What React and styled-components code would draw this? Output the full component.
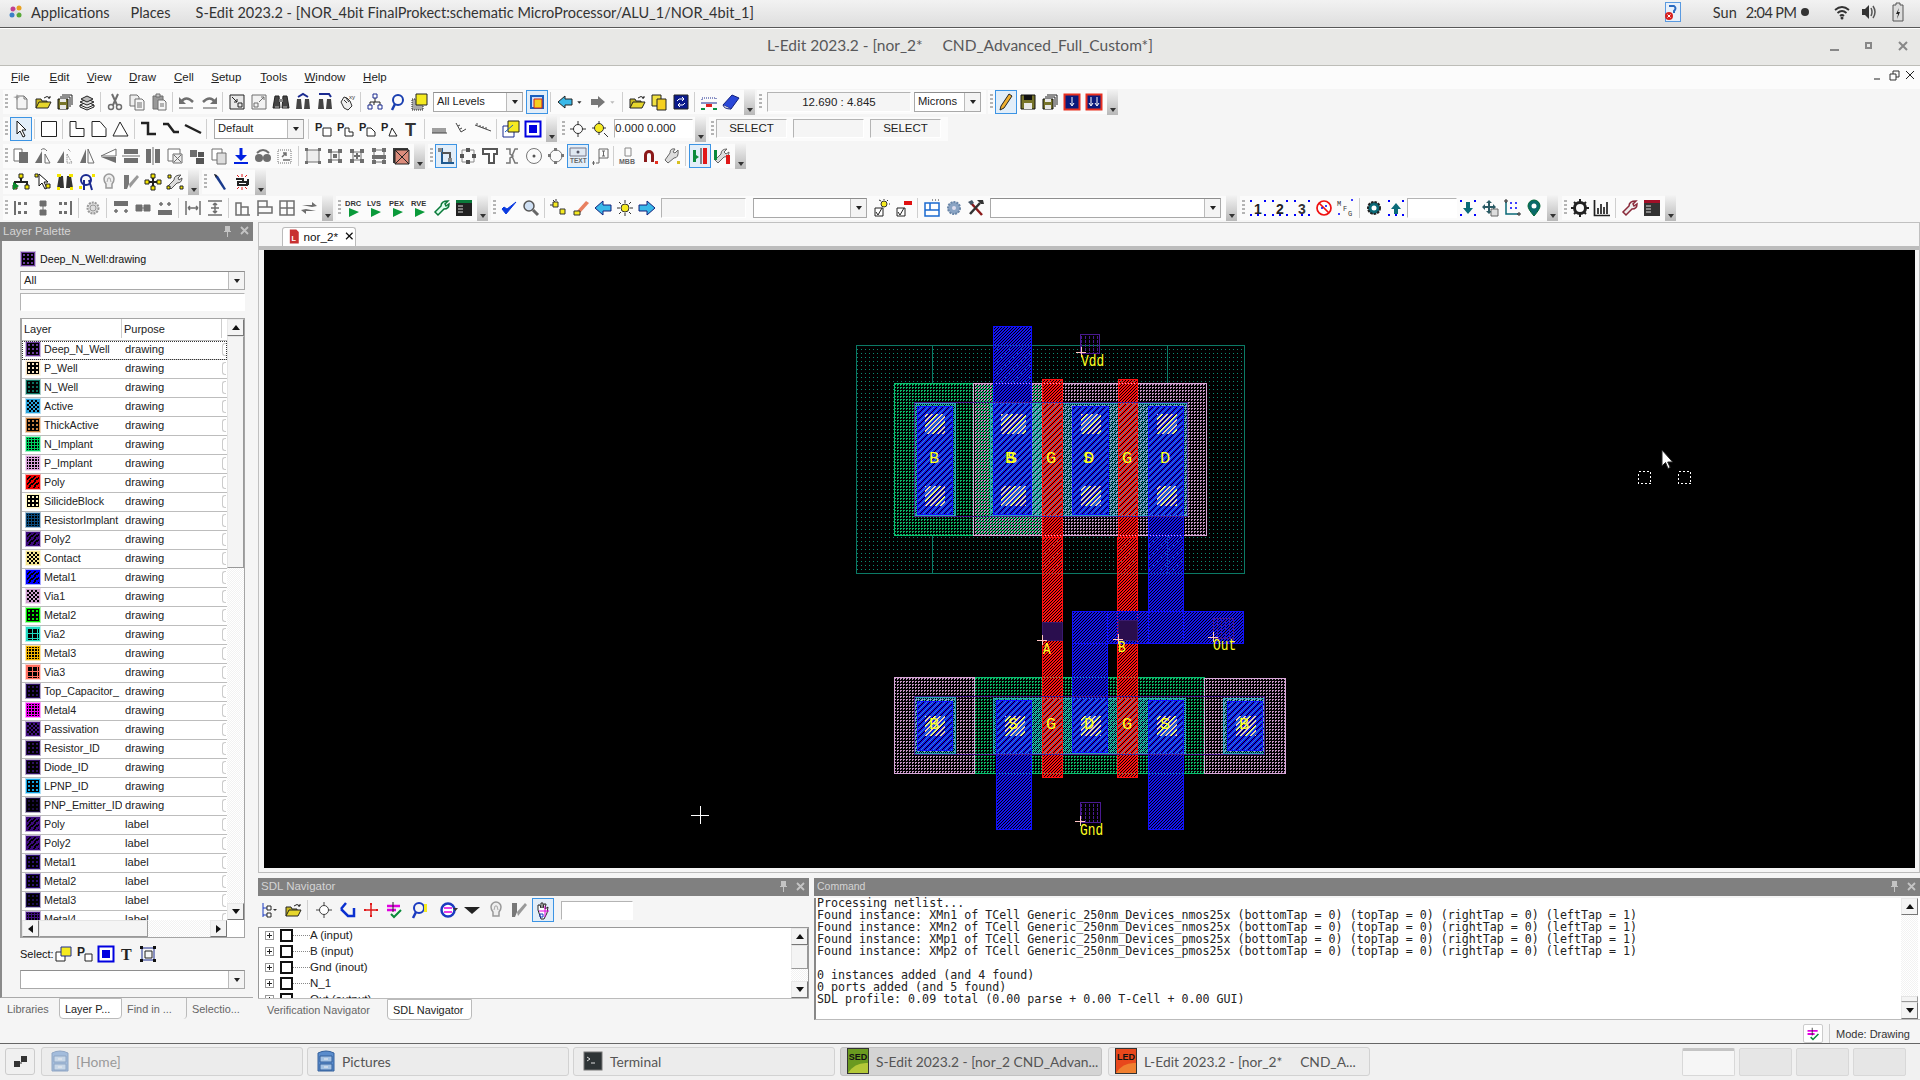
import React from 'react';
import styled, { createGlobalStyle } from 'styled-components';

const GlobalStyle = createGlobalStyle`
html, body { margin: 0; padding: 0; background: #f5f5f5; }
body { font-family: "Liberation Sans", Arial, sans-serif; font-size: 12px; color: #111; }
`;

/* ---------- toolbar icons, all drawn on an 18x18 grid ---------- */
const G = '#6f6f6f';
const L = '#a8a8a8';
const tiny = { fontFamily: 'Liberation Sans, sans-serif', fontWeight: 700 };
const Letter = ({ x = 1, y = 11, s = 11, c = '#222', t }) => <text x={x} y={y} fontSize={s} fill={c} style={tiny}>{t}</text>;
const Dots = ({ c = '#00f' }) => <path d="M1 1h2v2H1zM15 1h2v2h-2zM1 15h2v2H1zM15 15h2v2h-2zM8 15h2v2H8z" fill={c} />;

const icons = {
  new: <><path d="M5 3h7l3 3v10H5z" fill="#f4f4f4" stroke="#777" /><path d="M12 3v3h3" fill="none" stroke="#777" /><path d="M1 4l3-.5L5 1l1 2.500 2 .5-2 1-1 2.500L4 5z" fill="#999" /></>,
  open: <><path d="M2 15V6h5l1 2h5v2" fill="#c8b820" stroke="#222" /><path d="M2 15l3-6h12l-3 6z" fill="#e6d62c" stroke="#222" /><path d="M10 5q3-3 6 0m0-2v2h-2" fill="none" stroke="#222" /></>,
  saves: <><path d="M6 2h10v10M4 4h10v10" fill="none" stroke="#222" /><path d="M2 6h10v10H2z" fill="#77742a" stroke="#111" /><path d="M4 6h6v3H4zM4 12h6v4H4z" fill="#e8e8e8" /></>,
  stack: <><path d="M2 12l7-3 7 3-7 3z" fill="#eee" stroke="#222" /><path d="M2 9l7-3 7 3-7 3z" fill="#ddd" stroke="#222" /><path d="M3 6l6-3 6 3-6 3z" fill="#bbb" stroke="#222" /><path d="M2 12v2l7 3 7-3v-2" fill="none" stroke="#222" /></>,
  cut: <><path d="M6 1l5 11M12 1L7 12" stroke={G} strokeWidth="2" fill="none" /><circle cx="5" cy="14" r="2.500" fill="none" stroke={G} strokeWidth="1.500" /><circle cx="13" cy="14" r="2.500" fill="none" stroke={G} strokeWidth="1.500" /></>,
  copy: <><path d="M2 2h7l2 2v9H2z" fill="#eee" stroke={G} /><path d="M7 6h7l2 2v9H7z" fill="#f6f6f6" stroke={G} /><path d="M9 10h5M9 12h5M9 14h5" stroke={G} /></>,
  paste: <><path d="M3 3h10v13H3z" fill="#999" stroke={G} /><path d="M6 1h4v3H6z" fill="#ccc" stroke={G} /><path d="M8 7h6l2 2v8H8z" fill="#f6f6f6" stroke={G} /><path d="M10 11h4M10 13h4" stroke={G} /></>,
  undo: <><path d="M3 9q5-7 12 0" fill="none" stroke={G} strokeWidth="2.500" /><path d="M1 4v7h7z" fill={G} /><path d="M1 15h14" stroke={L} strokeWidth="2" /></>,
  redo: <><path d="M3 9q7-7 12 0" fill="none" stroke={G} strokeWidth="2.500" /><path d="M17 4v7h-7z" fill={G} /><path d="M3 15h14" stroke={L} strokeWidth="2" /></>,
  zin: <><path d="M2 2h14v14H2z" fill="#e8e8e8" stroke="#222" /><path d="M4 4l5 5M9 6v3H6" fill="none" stroke="#222" /><path d="M10 10h4v4h-4z" fill="none" stroke="#222" /></>,
  zout: <><path d="M2 2h14v14H2z" fill="#f2f2f2" stroke={G} /><path d="M9 9l5-5M11 4h3v3" fill="none" stroke={G} /><path d="M4 10h4v4H4z" fill="none" stroke={G} /></>,
  binoc: <><path d="M3 3h4l1 12H1zM11 3h4l2 12h-7z" fill="#444" stroke="#222" /><path d="M7 6h4v3H7z" fill="#888" /><path d="M3 14h4M11 14h4" stroke="#bbb" /></>,
  binoU: <><path d="M3 6h4l1 10H2zM11 6h4l1 10h-6z" fill="#444" /><path d="M4 4l5-3 5 3" fill="none" stroke="#1a2a90" strokeWidth="2" /></>,
  binoD: <><path d="M3 6h4l1 10H2zM11 6h4l1 10h-6z" fill="#444" /><path d="M3 1h10l2 3" fill="none" stroke="#1a2a90" strokeWidth="2" /></>,
  hand: <><path d="M3 9l3-5 3 1 3 3 2 5-4 4-4-2z" fill="#eee" stroke="#333" /><path d="M6 7l3 3M8 5l3 4" stroke="#333" /><text x="11" y="6" fontSize="6" fill="#333">xy</text></>,
  tree: <><path d="M9 5v4M4 12V9h10v3" fill="none" stroke="#222" /><path d="M7 1h4v4H7zM2 12h4v4H2zM12 12h4v4h-4z" fill="#fff" stroke="#1a2a90" /><path d="M8 9v3" stroke="#222" /></>,
  lens: <><circle cx="10" cy="7" r="5" fill="none" stroke="#1a3fb0" strokeWidth="2" /><path d="M7 11l-3 6" stroke="#1a3fb0" strokeWidth="2.500" /></>,
  layerY: <><path d="M2 6h11v11H2z" fill="#aaa" stroke="#222" strokeDasharray="1 1" /><path d="M6 1h11v11H6z" fill="#f5ea20" stroke="#222" /></>,
  layerSel: <><path d="M3 3h12v12H3z" fill="#cfe0f4" stroke="#1a5fc0" strokeWidth="2" /><path d="M6 6h8v9H6z" fill="#f5d020" stroke="#d02020" /></>,
  arrL: <path d="M2 9l7-6v3h7v6H9v3z" fill="#39b8e8" stroke="#222" />,
  arrRg: <path d="M16 9L9 3v3H2v6h7v3z" fill="#777" />,
  ddk: <path d="M2 7h7l-3.500 4z" fill="#333" />,
  ddg: <path d="M2 7h7l-3.500 4z" fill="#bbb" />,
  copyY: <><path d="M2 2h9v11H2z" fill="#f0e040" stroke="#222" /><path d="M7 6h9v11H7z" fill="#f6d020" stroke="#222" /></>,
  swap: <><path d="M2 2h14v14H2z" fill="#0a1a8c" stroke="#222" /><path d="M5 8q1-3 6-2m-1-2l2 2-2 2M13 10q-1 3-6 2m1-2l-2 2 2 2" fill="none" stroke="#fff" /></>,
  wireB: <><path d="M2 7V5h14v2" fill="none" stroke="#1a2a90" strokeDasharray="1 1" /><path d="M1 10h16" stroke="#1a2a90" /><path d="M6 11h6v3H6z" fill="#e02020" /><path d="M1 15h4v2H1zM13 15h4v2h-4z" fill="#0a9040" /></>,
  book: <><path d="M1 12L10 2l7 3-8 11z" fill="#2a48d8" stroke="#12207c" /><path d="M1 12q1 4 8 4" fill="#eee" stroke="#12207c" /></>,
  pencil: <><path d="M4 13L12 1l3 2-8 12-4 2z" fill="#f0b030" stroke="#222" /></>,
  save: <><path d="M2 2h14v14H2z" fill="#77742a" stroke="#111" /><path d="M5 2h8v5H5z" fill="#111" /><path d="M5 10h8v6H5z" fill="#e8e8e8" /></>,
  nav1: <><path d="M1.500 1.500h15v15h-15z" fill="#0a1a7c" stroke="#e83020" strokeWidth="2" /><path d="M9 4v8m-2-2l2 3 2-3" fill="none" stroke="#fff" /></>,
  nav2: <><path d="M1.500 1.500h15v15h-15z" fill="#0a1a7c" stroke="#e83020" strokeWidth="2" /><path d="M6 4v8m-2-2l2 3 2-3M12 4v8m-2-2l2 3 2-3" fill="none" stroke="#fff" /></>,
  pointer: <path d="M5 1v13l3-3 3 6 2-1-3-6h4z" fill="#fff" stroke="#111" />,
  rect: <path d="M1.500 1.500h15v15h-15z" fill="#fff" stroke="#222" />,
  polyL: <path d="M2 1.500h6v7h8v8H2z" fill="#fff" stroke="#222" />,
  polyP: <path d="M2 1.500h8l6 7v8H2z" fill="#fff" stroke="#222" />,
  tri: <path d="M8 2l8 14H1z" fill="#fff" stroke="#222" />,
  w1: <path d="M1 3h7v11h8" fill="none" stroke="#222" strokeWidth="2.500" />,
  w2: <path d="M1 4h5l6 8h5" fill="none" stroke="#222" strokeWidth="2.500" />,
  w3: <path d="M1 5l16 8" fill="none" stroke="#222" strokeWidth="2.500" />,
  pR: <><Letter t="P" /><path d="M9 8h8v8H9z" fill="#fff" stroke="#222" /></>,
  pL: <><Letter t="P" /><path d="M9 8h4v4h4v4H9z" fill="#fff" stroke="#222" /></>,
  pP: <><Letter t="P" /><path d="M9 8h4l4 4v4H9z" fill="#fff" stroke="#222" /></>,
  pT: <><Letter t="P" /><path d="M12 8l5 8H9z" fill="#fff" stroke="#222" /></>,
  bigT: <Letter t="T" x={3} y={16} s={18} c="#333" />,
  rule1: <path d="M2 13h15M3 13V8M5 13V8M7 13V8M9 13V8M11 13V8M13 13V8M15 13V8" stroke="#444" fill="none" />,
  rule2: <path d="M4 3l5 9 5-3M6 6l2-1M8 9l2-1" stroke="#444" fill="none" />,
  rule3: <path d="M1 5l16 6M3 5V3M6 7V5M9 8V6M12 9V7" stroke="#444" fill="none" />,
  layer2: <><path d="M1 6h11v11H1z" fill="#fff" stroke="#1a2a90" /><path d="M6 1h11v11H6z" fill="#f5ea20" stroke="#222" /><path d="M3 12l8-7" stroke="#1a5fc0" /></>,
  blueSq: <><path d="M1.500 1.500h15v15h-15z" fill="#fff" stroke="#0000e0" strokeWidth="2" /><path d="M5 5h8v8H5z" fill="#0000e0" /></>,
  target: <><circle cx="9" cy="9" r="4.500" fill="none" stroke="#333" /><path d="M9 1v4M9 13v4M1 9h4M13 9h4" stroke="#333" /></>,
  targetY: <><circle cx="8" cy="8" r="4.500" fill="#f5ea20" stroke="#333" /><path d="M8 1v3M8 12v3M1 8h3M12 8h3M13 13l4 4" stroke="#333" /></>,
  g1: <><path d="M2 2h8v12H2z" fill="#fff" stroke={G} /><path d="M7 5h9v11H7z" fill={G} /></>,
  g2: <><path d="M8 4v12H1z" fill={G} /><path d="M11 7l5 9h-5zM7 3q3-3 6 1" fill="none" stroke={G} /></>,
  g3: <><path d="M8 4v12H1z" fill={G} /><path d="M11 7l5 9h-5zM12 2l3 3" fill="none" stroke={G} strokeDasharray="1 1" /></>,
  g4: <><path d="M8 2v14H2z" fill={G} /><path d="M10 2v14h6z" fill="none" stroke={G} /></>,
  g5: <><path d="M16 2v7H1z" fill="#fff" stroke={G} /><path d="M16 16V10H1z" fill={G} /></>,
  g6: <><path d="M2 2h14v5H2zM2 11h14v5H2z" fill={G} /><path d="M0 9h18" stroke={G} /></>,
  g7: <><path d="M2 2h5v14H2zM11 2h5v14h-5z" fill={G} /><path d="M9 0v18" stroke={G} /></>,
  g8: <><path d="M2 2h12v12H2z" fill="#fff" stroke={G} /><path d="M7 7h9v9H7z" fill="#eee" stroke={G} /><path d="M8 8l7 7m0-7l-7 7" stroke={G} /></>,
  g9: <><path d="M2 3h7v7H2z" fill={G} /><path d="M10 5h6v5h-6zM8 11h8v6H8z" fill="#555" /></>,
  g10: <><path d="M2 2h10v11H2z" fill="#fff" stroke={G} /><path d="M7 6h9v11H7z" fill="#ddd" stroke={G} /></>,
  dl: <><path d="M9 1v9" stroke="#0020e0" strokeWidth="3" /><path d="M3 8h12l-6 6z" fill="#0020e0" /><path d="M2 16h14" stroke="#0020e0" strokeWidth="2" /></>,
  g11: <><circle cx="5" cy="11" r="4" fill={G} /><circle cx="13" cy="11" r="4" fill={G} /><path d="M3 6q6-6 12 0" fill="none" stroke={G} strokeWidth="2" /></>,
  g12: <><path d="M2 3h13v13H2z" fill="none" stroke={G} strokeDasharray="1 1" /><path d="M6 10l4-4m-3 0h3v3M7 13h7" fill="none" stroke={G} strokeWidth="1.500" /></>,
  n1: <><path d="M3 3h12v12H3z" fill="#eee" stroke={G} /><path d="M1 1h3v3H1zM14 1h3v3h-3zM1 14h3v3H1zM14 14h3v3h-3z" fill={G} /></>,
  n2: <><path d="M5 5h8v8H5z" fill="none" stroke={G} /><path d="M2 2h4v4H2zM12 2h4v4h-4zM2 12h4v4H2zM12 12h4v4h-4zM7 7h4v4H7z" fill={G} /></>,
  n3: <><path d="M5 5h8v8H5z" fill="none" stroke={G} /><path d="M2 2h4v4H2zM12 2h4v4h-4zM2 12h4v4H2zM12 12h4v4h-4z" fill={G} /><path d="M9 6v6M6 9h6" stroke={G} strokeWidth="2" /></>,
  n4: <><path d="M4 3h10v12H4z" fill="none" stroke={G} /><path d="M2 1h4v4H2zM12 1h4v4h-4zM2 13h4v4H2zM12 13h4v4h-4z" fill={G} /><path d="M2 8h14v4H2z" fill={G} /></>,
  n5: <><path d="M1 1h15v15H1z" fill="#3b3b3b" /><path d="M3 3h14v14H3z" fill="#dc8c7c" stroke="#222" /><path d="M3 3l14 14M17 3L3 17" stroke="#222" /></>,
  e1: <><path d="M3 2h2v14h12" fill="none" stroke="#1f5a90" strokeWidth="2" /><path d="M5 6h8v6" fill="none" stroke="#555" strokeWidth="2" /><path d="M1 1h4v4H1zM11 11h4v4h-4z" fill="#888" /></>,
  e2: <><path d="M3 3h12v12H3z" fill="none" stroke="#888" /><path d="M1 7h4v4H1zM13 7h4v4h-4zM7 1h4v4H7zM7 13h4v4H7z" fill="#555" /></>,
  e3: <path d="M2 2h14v5h-3v9H8V7H2z" fill="#fff" stroke="#555" strokeWidth="2" />,
  e4: <path d="M3 2h4v5l3 2-3 2v5H3M15 2h-3l-3 7 3 7h3" fill="none" stroke="#777" strokeWidth="1.500" />,
  e5: <><circle cx="9" cy="9" r="7.500" fill="none" stroke="#777" /><circle cx="9" cy="9" r="1.500" fill="#555" /></>,
  e6: <><circle cx="9" cy="9" r="6" fill="none" stroke="#777" /><path d="M1 7h3v3H1zM14 7h3v3h-3zM7 1h3v3H7zM7 14h3v3H7z" fill="#777" /></>,
  text: <><path d="M1 1h16v8H1z" fill="#dfe8f2" stroke="#778" /><circle cx="9" cy="5" r="1.500" fill="#556" /><text x="1" y="16" fontSize="6.500" fill="#666" style={tiny}>TEXT</text></>,
  e7: <><path d="M8 2h9v9H8z" fill="none" stroke="#666" /><path d="M12.500 4v5M11 4h3M11 9h3M1 16h3M2.500 14v4M5 16h3V11" fill="none" stroke="#666" /></>,
  mbb: <><path d="M6 1h6v8H6z" fill="none" stroke="#888" /><text x="0" y="17" fontSize="7" fill="#666" style={tiny}>MBB</text></>,
  magnet: <><path d="M3 15V8a5 5 0 0 1 10 0v7h-3V8a2 2 0 0 0-4 0v7z" fill="#8c1a1a" /><path d="M14 14h3v3h-3z" fill="#e83020" /></>,
  wrench: <><path d="M15 3l-3 3-2-1 2-3q-5-1-5 4L2 13l3 3 6-5q5 0 4-8z" fill="#ddd" stroke="#666" /><path d="M14 14h3v3h-3z" fill="#d8c020" /></>,
  meter: <><path d="M2 3h3v12H2z" fill="#0a8a3a" /><path d="M5 8l3 2-3 2z" fill="#0a8a3a" /><path d="M12 1h4v16h-4z" fill="#e01818" /><path d="M10 1v16" stroke="#222" /></>,
  meterW: <><path d="M14 2l-3 3 2 2 3-2q0 5-5 5L5 16l-3-3 6-6q0-5 6-5z" fill="#ddd" stroke="#666" /><path d="M1 3h3v10H1z" fill="#0a8a3a" /><path d="M13 8h4v9h-4z" fill="#e01818" /></>,
  y1: <><path d="M9 3v6M3 12V9h12v3" fill="none" stroke="#222" strokeWidth="2" /><path d="M7 1h4v4H7zM1 12h4v4H1zM13 12h4v4h-4z" fill="#f5e600" stroke="#222" /><path d="M1 9l6 4-6 4z" fill="#0a8a2a" /></>,
  y2: <><path d="M5 1v12l3-3 3 6 2-1-3-6h4z" fill="#fff" stroke="#111" /><path d="M12 11h4v4h-4zM1 1h3v3H1z" fill="#f5e600" stroke="#222" /></>,
  y3: <><path d="M3 3h4l1 12H1zM11 3h4l2 12h-7z" fill="#333" /><path d="M1 1h4v3H1zM13 1h4v3h-4zM1 14h3v3H1zM14 14h3v3h-3z" fill="#f5e600" /></>,
  y4: <><circle cx="8" cy="7" r="5" fill="none" stroke="#1a2a90" strokeWidth="2" /><path d="M6 7v10M11 7l3 10" stroke="#1a2a90" strokeWidth="2" /><path d="M1 13h3v3H1zM14 1h3v3h-3z" fill="#f5e600" /></>,
  bulb: <><path d="M4 6a5 5 0 0 1 10 0q0 3-2 5v4H6v-4Q4 9 4 6z" fill="#eee" stroke="#999" strokeWidth="1.500" /><path d="M7 9l1-4h2l1 4" fill="none" stroke="#aaa" /></>,
  brush: <><path d="M2 2h5v9l-2 5H2z" fill="#777" /><path d="M7 11L15 2l2 2-9 11z" fill="#999" /></>,
  y5: <><path d="M9 3v12M3 9h12" stroke="#222" strokeWidth="2" /><path d="M7 1h4v4H7zM1 7h4v4H1zM13 7h4v4h-4zM7 13h4v4H7z" fill="#f5e600" stroke="#222" /></>,
  y6: <><path d="M15 2l-3 3 1 2 3-2q0 5-5 5L5 16l-3-3 6-6q0-5 7-5z" fill="#ddd" stroke="#555" /><path d="M1 13h3v3H1zM14 13h3v3h-3zM2 2h3v3H2z" fill="#f5e600" stroke="#222" /></>,
  probe: <><path d="M3 1l4 2 8 13-2 1L5 5z" fill="#1a3a8c" /><path d="M3 1l3 1-1 3z" fill="#222" /></>,
  brk: <><path d="M9 1v3M4 2l2 2M14 2l-2 2M9 17v-3M4 16l2-2M14 16l-2-2" stroke="#e01818" /><path d="M3 6h7v3H5v3h5M8 9h6v3H8v-1M15 6v6" fill="none" stroke="#222" strokeWidth="2" /></>,
  h1: <><path d="M2 2h2v14H2z" fill={G} /><path d="M6 3h3v3H6zM12 3h3v3h-3zM6 12h3v3H6zM12 12h3v3h-3z" fill={G} /></>,
  h2: <path d="M6 2h6v5H6zM6 11h6v5H6zM9 7v4" fill={G} stroke={G} />,
  h3: <><path d="M14 2h2v14h-2z" fill={G} /><path d="M3 3h3v3H3zM8 3h3v3H8zM3 12h3v3H3zM8 12h3v3H8z" fill={G} /></>,
  gear: <><circle cx="9" cy="9" r="5.500" fill="#ddd" stroke="#999" strokeWidth="2" strokeDasharray="2 1" /><circle cx="9" cy="9" r="3" fill="none" stroke="#999" /></>,
  h4: <><path d="M2 2h14v5H2z" fill={G} /><path d="M2 12h4M4 10v4M12 12h4M14 10v4" stroke={G} strokeWidth="1.500" /></>,
  h5: <path d="M2 6h6v6H2zM10 6h6v6h-6zM8 9h2" fill={G} stroke={G} />,
  h6: <><path d="M2 11h14v5H2z" fill={G} /><path d="M3 5h4M5 3v4M11 5h4M13 3v4" stroke={G} strokeWidth="1.500" /></>,
  h7: <path d="M2 2v14M16 2v14M4 9h10M4 9l2-2m-2 2l2 2M14 9l-2-2m2 2l-2 2" fill="none" stroke={G} strokeWidth="1.500" />,
  h8: <path d="M2 2h14M2 16h14M9 4v10M9 4L7 6m2-2l2 2M9 14l-2-2m2 2l2-2M5 9h8" fill="none" stroke={G} strokeWidth="1.500" />,
  h9: <path d="M2 16V4h5v12zM7 16V8h7v8zM2 16h14" fill="none" stroke={G} strokeWidth="1.500" />,
  h10: <path d="M2 2h9v6H2zM2 8h14v6H2zM2 14v3" fill="none" stroke={G} strokeWidth="1.500" />,
  h11: <path d="M2 2h14v14H2zM9 2v14M2 9h14" fill="none" stroke={G} strokeWidth="1.500" />,
  h12: <path d="M2 6h10V3l5 4-5 1zM16 12H6v3l-5-4 5-1z" fill={G} />,
  drc: <><text x="0" y="7" fontSize="7.500" fill="#333" style={tiny}>DRC</text><path d="M4 9l10 4-10 5z" fill="#0a9a3a" /></>,
  lvs: <><text x="0" y="7" fontSize="7.500" fill="#333" style={tiny}>LVS</text><path d="M4 9l10 4-10 5z" fill="#0a9a3a" /></>,
  pex: <><text x="0" y="7" fontSize="7.500" fill="#333" style={tiny}>PEX</text><path d="M4 9l10 4-10 5z" fill="#0a9a3a" /></>,
  rve: <><text x="0" y="7" fontSize="7.500" fill="#333" style={tiny}>RVE</text><path d="M4 9l10 4-10 5z" fill="#0a9a3a" /></>,
  wrGreen: <path d="M15 2l-3 3 1 2 3-2q0 5-5 5L5 16l-3-3 6-6q0-5 7-5z" fill="#dfe" stroke="#0a7a3a" strokeWidth="1.500" />,
  termG: <><path d="M1 1h16v16H1z" fill="#222" /><path d="M1 1h16v3H1z" fill="#0a7a3a" /><path d="M3 7h5M3 10h5M3 13h5" stroke="#ddd" /></>,
  check: <path d="M2 10l4 5L16 3l-9 7-3-2z" fill="#0a3ae0" stroke="#0a3ae0" />,
  lensG: <><circle cx="7" cy="7" r="5" fill="#cfe0f4" stroke="#555" strokeWidth="1.500" /><path d="M11 11l5 5" stroke="#666" strokeWidth="3" /></>,
  sunB: <><path d="M6 4l-3-3M6 2V0M3 6H0" stroke="#333" /><path d="M3 3h5v5H3zM10 10h5v5h-5z" fill="#f5ea20" stroke="#333" /></>,
  brushO: <><path d="M5 12L14 2l3 2-9 10z" fill="#e88060" /><path d="M2 12h6v4H2z" fill="#f5ea20" stroke="#333" /></>,
  arrLB: <path d="M1 9l8-7v4h8v6H9v4z" fill="#39b8e8" stroke="#12207c" />,
  sun: <><circle cx="9" cy="9" r="4" fill="#f5ea20" stroke="#333" /><path d="M9 1v3M9 14v3M1 9h3M14 9h3M3 3l2 2M13 13l2 2M15 3l-2 2M5 13l-2 2" stroke="#333" /></>,
  arrRB: <path d="M17 9L9 2v4H1v6h8v4z" fill="#39b8e8" stroke="#12207c" />,
  chkSun: <><circle cx="11" cy="5" r="3" fill="#f5ea20" stroke="#333" /><path d="M11 0v1M16 5h1M15 1l-1 1M6 1l2 1" stroke="#333" /><path d="M2 9h8v8H2z" fill="#fff" stroke="#222" /><path d="M3 13l2 3 4-7" fill="none" stroke="#222" /></>,
  chkRed: <><path d="M9 2h8v4H9z" fill="#e01010" /><path d="M2 9h8v8H2z" fill="#fff" stroke="#222" /><path d="M3 13l2 3 4-7" fill="none" stroke="#222" /></>,
  panel: <><path d="M2 4h14v13H2zM2 11h14M7 4v7" fill="#fff" stroke="#1a6ad0" strokeWidth="1.500" /><path d="M9 1h1M12 1h1M15 1h1" stroke="#333" /></>,
  gearB: <><circle cx="9" cy="9" r="6" fill="#8aa4c4" stroke="#6a86a8" strokeWidth="2" strokeDasharray="2 1" /><circle cx="9" cy="9" r="2" fill="#dde" /></>,
  hammers: <><path d="M4 4l11 12" stroke="#8a1a1a" strokeWidth="2.500" /><path d="M13 4L3 15" stroke="#333" strokeWidth="2.500" /><path d="M10 1h6l1 4h-3z" fill="#333" /><path d="M1 3l4-2 2 3-3 2z" fill="#456" /></>,
  n1b: <><Dots /><Letter t="1" x={5} y={15} s={14} c="#222" /></>,
  n2b: <><Dots /><Letter t="2" x={5} y={15} s={14} c="#222" /></>,
  n3b: <><Dots /><Letter t="3" x={5} y={15} s={14} c="#333" /></>,
  no: <><circle cx="9" cy="9" r="7" fill="#fff" stroke="#f01010" strokeWidth="1.700" /><path d="M4 4l10 10" stroke="#f01010" strokeWidth="1.700" /><path d="M6 9h2M7 8v2M10 7h2M11 6v2" stroke="#00f" /></>,
  mfg: <><text x="0" y="7" fontSize="7" fill="#333" fontFamily="Liberation Mono">M</text><text x="6" y="12" fontSize="7" fill="#333" fontFamily="Liberation Mono">F</text><text x="11" y="17" fontSize="7" fill="#333" fontFamily="Liberation Mono">G</text><path d="M14 1h2M15 0v2M1 15h2M2 14v2" stroke="#00f" /></>,
  gearT: <><circle cx="9" cy="9" r="6" fill="#0a6a78" stroke="#222" strokeWidth="2" strokeDasharray="2.500 1" /><circle cx="9" cy="9" r="2.500" fill="#fff" /></>,
  upT: <><path d="M9 4l5 6h-3v5H7v-5H4z" fill="#0a6a78" /><Dots /></>,
  dnT: <><path d="M9 15l5-6h-3V3H7v6H4z" fill="#0a6a78" /><path d="M1 1h2v2H1zM15 1h2v2h-2zM1 15h2v2H1zM15 15h2v2h-2z" fill="#00f" /></>,
  moveT: <><path d="M8 1l3 3H9v3h3V5l3 3-3 3V9H9v3h2l-3 3-3-3h2V9H4v2L1 8l3-3v2h3V4H5z" fill="#2a5a64" /><path d="M10 10h7v7h-7z" fill="#ddd" stroke="#666" /></>,
  gridT: <><path d="M3 2v13h13" fill="none" stroke="#0a6a78" strokeWidth="1.500" /><path d="M2 1h2v2H2zM15 14h2v2h-2z" fill="#fff" stroke="#222" /><path d="M7 4h2M8 3v2M12 4h2M13 3v2M7 9h2M8 8v2M12 9h2M13 8v2" stroke="#00f" /></>,
  pin: <><path d="M9 17Q3 10 3 7a6 6 0 0 1 12 0q0 3-6 10z" fill="#0a6a6a" stroke="#063" /><circle cx="9" cy="7" r="2.500" fill="#fff" /></>,
  gearK: <><circle cx="9" cy="9" r="5.500" fill="none" stroke="#222" strokeWidth="3" /><path d="M9 0v4M9 14v4M0 9h4M14 9h4M3 3l2 2M13 13l2 2M15 3l-2 2M5 13l-2 2" stroke="#222" strokeWidth="2" /></>,
  bars: <path d="M1.500 1v15.500H17M5 15V9M8 15V5M11 15V8M14 15V3" fill="none" stroke="#222" strokeWidth="1.700" />,
  wrRed: <path d="M15 2l-3 3 1 2 3-2q0 5-5 5L5 16l-3-3 6-6q0-5 7-5z" fill="#eee" stroke="#8a2a3a" strokeWidth="1.500" />,
  termR: <><path d="M1 1h16v16H1z" fill="#333" /><path d="M1 1h16v3H1z" fill="#a01028" /><path d="M3 7h5M3 10h5M3 13h5" stroke="#ddd" /></>,
  sel1: <><path d="M1 7h9v9H1z" fill="#fff" stroke="#222" /><path d="M6 2h10v9H6z" fill="#f5ea20" stroke="#1a2a90" /></>,
  selP: <><Letter t="P" s={12} /><path d="M9 9h7v7H9z" fill="#fff" stroke="#222" /></>,
  selT: <text x="3" y="15" fontSize="16" fill="#222" fontFamily="Liberation Serif" fontWeight="700">T</text>,
  selB: <><path d="M3 3h12v12H3z" fill="none" stroke="#1a2a90" /><path d="M1 1h3v3H1zM14 1h3v3h-3zM1 14h3v3H1zM14 14h3v3h-3z" fill="#111" /><path d="M6 6h7v7H6z" fill="none" stroke="#222" /></>,
  sTree: <><path d="M3 2v14M3 7h7M3 14h7" fill="none" stroke="#1a3ac0" /><path d="M7 5h4v4H7zM7 12h4v4H7z" fill="#fff" stroke="#222" /><path d="M13 8h4l-2 2z" fill="#333" /></>,
  sTarget: <><circle cx="9" cy="9" r="4.500" fill="#fff" stroke="#444" /><path d="M9 1v4M9 13v4M1 9h4M13 9h4" stroke="#444" /></>,
  sRoute: <path d="M3 8L8 2M3 8l7 7h6V7" fill="none" stroke="#0a30d0" strokeWidth="2.500" />,
  sNet: <><path d="M9 3v12M3 9h12" stroke="#e01818" strokeWidth="1.500" /><path d="M8 2h2v2H8zM2 8h2v2H2zM14 8h2v2h-2zM8 14h2v2H8z" fill="#e01818" /></>,
  sChk: <><path d="M2 5h13M2 9h9" stroke="#e000e0" strokeWidth="2.500" /><path d="M8 1v10" stroke="#222" /><path d="M6 13l3 3 7-7" fill="none" stroke="#0a8a3a" strokeWidth="2" /></>,
  sLens: <><circle cx="10" cy="7" r="5" fill="none" stroke="#1a3ac0" strokeWidth="2" /><path d="M7 11l-3 6" stroke="#1a3ac0" strokeWidth="2.500" /><path d="M15 3h3v8h-3z" fill="#f5ea20" /></>,
  sCirc: <><circle cx="8" cy="9" r="6.500" fill="#fff" stroke="#1a3ac0" strokeWidth="2.500" /><path d="M4 7h8M4 11h8" stroke="#e000e0" strokeWidth="1.500" /><path d="M13 7h5l-2.500 3z" fill="#333" /></>,
  sDrop: <path d="M1 6h16l-8 7z" fill="#222" />,
  sHand: <><path d="M4 9V4l2 0 1 3V2l2 0 0 5 1-4h2l-1 5 3-2-1 6-3 6H7z" fill="#fff" stroke="#222" /><path d="M5 10h10M11 5v11" stroke="#e000e0" /><path d="M6 13h3v3H6z" fill="none" stroke="#1a3ac0" /></>,
};

/* ---------- app chrome ---------- */
const Page = styled.div`
width: 1920px;
height: 1080px;
display: flex;
flex-direction: column;
overflow: hidden;
background: #f5f5f5;
`;

const TopBar = styled.div`
height: 28px;
box-sizing: border-box;
border-bottom: 1px solid #585858;
background: linear-gradient(#f2f2f2, #dedede);
display: flex;
align-items: center;
font-family: Lato, "Open Sans", sans-serif;
font-size: 14.500px;
color: #333;
padding: 0 8px 3px;
flex: none;
`;

const TopMenu = styled.span`
margin-left: ${(p) => p.$ml}px;
letter-spacing: ${(p) => p.$tight || 0}px;
white-space: pre;
`;

const TrayIcon = styled.svg`
margin-left: ${(p) => p.$ml}px;
flex: none;
`;

const TitleBar = styled.div`
height: 38px;
box-sizing: border-box;
border-top: 1px solid #fff;
background: #e8e8e6;
border-bottom: 1px solid #bdbdb8;
display: flex;
align-items: center;
position: relative;
justify-content: center;
padding-bottom: 4px;
font-family: Lato, "Open Sans", sans-serif;
font-size: 15.500px;
color: #58585a;
white-space: pre;
flex: none;
`;

const WinButtons = styled.div`
position: absolute;
right: 10px;
top: 10px;
display: flex;
gap: 20px;
`;

const MenuBar = styled.div`
height: 23px;
padding-bottom: 1px;
box-sizing: border-box;
background: #fcfcfc;
display: flex;
align-items: center;
position: relative;
flex: none;
`;

const MenuItem = styled.span`
margin-left: ${(p) => p.$ml}px;
font-size: 11.500px;
color: #222;
`;

const MdiButtons = styled.div`
position: absolute;
right: 3px;
top: 3px;
display: flex;
gap: 3px;
`;

const ToolArea = styled.div`
height: 133px;
box-sizing: border-box;
background: #f5f5f5;
flex: none;
`;

const ToolRow = styled.div`
height: ${(p) => p.$h}px;
display: flex;
align-items: center;
padding-left: 3px;
gap: 2px;
`;

const Toolbar = styled.div`
height: 24px;
background: #fbfbfb;
display: flex;
align-items: center;
margin-left: ${(p) => p.$ml || 0}px;
width: ${(p) => (p.$w ? `${p.$w}px` : 'auto')};
flex: none;
`;

const Grip = styled.div`
width: 3px;
height: 16px;
margin: 0 2px;
background: repeating-linear-gradient(#b4b4b4 0 2px, transparent 2px 4px);
flex: none;
`;

const Handle = styled.div`
width: 11px;
height: 26px;
margin-left: 2px;
background: linear-gradient(#f4f4f4, #b8b8b8);
position: relative;
flex: none;
&::after {
  content: '';
  position: absolute;
  left: 3px;
  bottom: 3px;
  border-top: 4px solid #333;
  border-left: 3px solid transparent;
  border-right: 3px solid transparent;
}
`;

const Sep = styled.div`
width: 6px;
height: 20px;
flex: none;
position: relative;
&::after {
  content: '';
  position: absolute;
  left: 2px;
  top: 0;
  bottom: 0;
  width: 1px;
  background: ${(p) => (p.$blank ? 'transparent' : '#cfcfcf')};
}
`;

const IconBtn = styled.div`
width: ${(p) => (p.$mini ? 11 : 22)}px;
height: 24px;
display: flex;
align-items: center;
justify-content: center;
box-sizing: border-box;
flex: none;
border: 1px solid ${(p) => (p.$on ? '#3c94e4' : 'transparent')};
background: ${(p) => (p.$on ? '#e2eef9' : 'transparent')};
`;

const Icon = ({ name, size = 18 }) => (
    <svg width={size} height={size} viewBox="0 0 18 18" overflow="visible">{icons[name]}</svg>
);

// "!x" is a pressed button, "~x" a narrow drop-down arrow, "|" a separator
const Tools = ({ items }) => items.split(' ').map((it, i) => {
    if (it === '|') return <Sep key={i} />;
    if (it[0] === '~') return <IconBtn key={i} $mini><Icon name={it.slice(1)} size={11} /></IconBtn>;
    if (it[0] === '!') return <IconBtn key={i} $on><Icon name={it.slice(1)} /></IconBtn>;
    return <IconBtn key={i}><Icon name={it} /></IconBtn>;
});

const ComboBox = styled.div`
width: ${(p) => (p.$w ? `${p.$w}px` : 'auto')};
height: ${(p) => p.$h || 20}px;
margin: 0 ${(p) => p.$mr ?? 3}px 0 ${(p) => p.$ml ?? 3}px;
border: 1px solid #a9a9a9;
border-top-color: #8e8e8e;
background: #fff;
box-sizing: border-box;
display: flex;
align-items: center;
justify-content: space-between;
padding-left: 3px;
font-size: 11.200px;
color: #222;
flex: none;
`;

const ComboLabel = styled.span`
margin-top: -2px;
`;

const ComboArrow = styled.div`
width: 15px;
align-self: stretch;
border-left: 1px solid #bbb;
background: #f4f4f4;
display: flex;
align-items: center;
justify-content: center;
&::after {
  content: '';
  border-top: 4px solid #222;
  border-left: 3px solid transparent;
  border-right: 3px solid transparent;
}
`;

const Combo = ({ children, ...rest }) => (
    <ComboBox {...rest}><ComboLabel>{children}</ComboLabel><ComboArrow /></ComboBox>
);

const Field = styled.div`
width: ${(p) => p.$w}px;
height: ${(p) => p.$h || 20}px;
margin: 0 ${(p) => p.$mr || 0}px 0 ${(p) => p.$ml || 0}px;
box-sizing: border-box;
border: 1px solid #b4b4b4;
border-right-color: #fff;
border-bottom-color: #fff;
background: ${(p) => p.$bg || '#f5f5f5'};
display: flex;
align-items: center;
justify-content: ${(p) => (p.$left ? 'flex-start' : 'center')};
padding-bottom: 1px;
font-size: 11.500px;
color: #222;
flex: none;
`;

/* ---------- docks ---------- */
const Workspace = styled.div`
height: 802px;
display: flex;
flex: none;
`;

const LeftDock = styled.div`
width: 258px;
flex: none;
display: flex;
flex-direction: column;
`;

const DockTitle = styled.div`
height: ${(p) => p.$h || 19}px;
box-sizing: border-box;
background: #808080;
color: #d4d4d4;
font-size: ${(p) => p.$fs || 11.5}px;
display: flex;
align-items: center;
justify-content: space-between;
padding: 0 4px 2px 3px;
flex: none;
margin-right: ${(p) => p.$mr || 0}px;
`;

const DockMarks = styled.div`
display: flex;
align-items: center;
gap: 8px;
`;

const Marks = () => (
    <DockMarks>
        <svg width="9" height="12" viewBox="0 0 9 12"><path d="M2 1h5v5h1v1H1V6h1zM4 7h1v5H4z" fill="#c4c4c4" /></svg>
        <svg width="9" height="9" viewBox="0 0 9 9"><path d="M1 1l7 7M8 1L1 8" stroke="#c4c4c4" strokeWidth="1.800" /></svg>
    </DockMarks>
);

const LayerPanel = styled.div`
height: 757px;
margin-right: 5px;
border-left: 2px solid #8a8a8a;
border-bottom: 1px solid #aaa;
padding: 12px 8px 0 18px;
box-sizing: border-box;
flex: none;
`;

const CurrentLayer = styled.div`
display: flex;
align-items: center;
gap: 5px;
height: 14px;
margin: -1px 0 5px 1px;
font-size: 10.700px;
`;

const Swatch = styled.div`
width: 14px;
height: 14px;
box-sizing: border-box;
border: 1px solid ${(p) => p.$c};
outline: 1px solid ${(p) => p.$c}55;
background-color: #000;
background-image: ${(p) => swatchFills[p.$p](p.$c)};
background-size: ${(p) => (p.$p === 'dots' ? '4px 4px' : p.$p === 'fine' ? '3px 3px' : p.$p === 'check' ? '4px 4px' : '5px 5px')};
flex: none;
`;

const swatchFills = {
    dots: (c) => `radial-gradient(${c} 0 1px, transparent 1px)`,
    fine: (c) => `radial-gradient(${c} 0 1px, transparent 1.300px)`,
    diag: (c) => `repeating-linear-gradient(135deg, ${c} 0 1.500px, #000 1.500px 3px)`,
    check: (c) => `conic-gradient(${c} 25%, #000 0 50%, ${c} 0 75%, #000 0)`,
    grid: (c) => `linear-gradient(${c} 1px, transparent 1px), linear-gradient(90deg, ${c} 1px, transparent 1px)`,
};

const Spacer = styled.div`
height: ${(p) => p.$h}px;
flex: none;
`;

const TableBox = styled.div`
height: 620px;
width: 225px;
box-sizing: border-box;
border: 1px solid #a4a4a4;
border-left-width: 2px;
display: grid;
grid-template-columns: 205px 17px;
grid-template-rows: 1fr 17px;
background: #fff;
`;

const TableMain = styled.div`
overflow: hidden;
`;

const TableRow = styled.div`
height: ${(p) => p.$head ? 22 : 19}px;
box-sizing: border-box;
display: grid;
grid-template-columns: 100px 100px 5px;
align-items: center;
padding-bottom: 2px;
border-bottom: 1px solid #bdbdbd;
outline: ${(p) => (p.$focus ? '1px dotted #333' : 'none')};
outline-offset: -1px;
font-size: 11.500px;
color: #222;
`;

const LayerCell = styled.div`
display: flex;
align-items: center;
gap: 4px;
padding-left: 4px;
font-size: 10.700px;
white-space: nowrap;
height: 100%;
overflow: hidden;
`;

const PurposeCell = styled.div`
padding-left: 3px;
font-size: 11.200px;
`;

const HeadCell = styled.div`
height: 100%;
display: flex;
align-items: center;
padding-left: 2px;
font-size: 11px;
border-right: ${(p) => (p.$last ? 'none' : '1px solid #ccc')};
`;

const ColMark = styled.div`
width: 3px;
height: 11px;
border: 1px solid #ccc;
border-right: none;
border-radius: 3px 0 0 3px;
`;

const VBar = styled.div`
display: flex;
flex-direction: column;
background: repeating-conic-gradient(#f2f2f2 0 25%, #fff 0 50%) 0 0 / 2px 2px;
height: 100%;
width: ${(p) => p.$w || 17}px;
flex: none;
`;

const HBar = styled.div`
display: flex;
background: repeating-conic-gradient(#f2f2f2 0 25%, #fff 0 50%) 0 0 / 2px 2px;
height: 17px;
`;

const ScrollThumb = styled.div`
background: #f4f4f4;
box-sizing: border-box;
border: 1px solid #e4e4e4;
border-right-color: #999;
border-bottom-color: #999;
height: ${(p) => (p.$len ? `${p.$len}px` : '100%')};
width: ${(p) => (p.$wide ? `${p.$wide}px` : '100%')};
flex: none;
`;

const ScrollGap = styled.div`
flex: 1;
`;

const ScrollBtn = styled.div`
width: ${(p) => p.$w || 17}px;
height: ${(p) => p.$hh || 17}px;
box-sizing: border-box;
background: #f4f4f4;
border: 1px solid #e8e8e8;
border-right-color: #777;
border-bottom-color: #777;
display: flex;
align-items: center;
justify-content: center;
flex: none;
&::after {
  content: '';
  ${(p) => ({
      up: 'border-bottom: 5px solid #111; border-left: 4px solid transparent; border-right: 4px solid transparent;',
      down: 'border-top: 5px solid #111; border-left: 4px solid transparent; border-right: 4px solid transparent;',
      left: 'border-right: 5px solid #111; border-top: 4px solid transparent; border-bottom: 4px solid transparent;',
      right: 'border-left: 5px solid #111; border-top: 4px solid transparent; border-bottom: 4px solid transparent;',
  }[p.$dir])}
}
`;

const SelectRow = styled.div`
display: flex;
align-items: center;
height: 32px;
font-size: 11px;
`;

const SelectIcons = styled.div`
display: flex;
align-items: center;
margin-left: -1px;
& > * { margin-right: -1px; }
`;

const TabStrip = styled.div`
height: ${(p) => p.$h || 25}px;
display: flex;
align-items: flex-start;
padding-left: ${(p) => p.$pl || 0}px;
flex: none;
border-top: ${(p) => (p.$line ? '1px solid #bbb' : 'none')};
box-sizing: border-box;
`;

const DockTab = styled.div`
width: ${(p) => p.$w}px;
height: 21px;
box-sizing: border-box;
display: flex;
align-items: center;
padding-left: 5px;
font-size: 10.900px;
color: ${(p) => (p.$on ? '#222' : '#666')};
background: ${(p) => (p.$on ? '#fff' : 'transparent')};
border: ${(p) => (p.$on ? '1px solid #bbb' : 'none')};
border-radius: 0 0 4px 4px;
border-right: ${(p) => (p.$div ? '1px solid #bbb' : p.$on ? '1px solid #bbb' : 'none')};
white-space: nowrap;
flex: none;
`;

/* ---------- document window ---------- */
const RightSide = styled.div`
flex: 1;
min-width: 0;
display: flex;
flex-direction: column;
`;

const DocFrame = styled.div`
height: 651px;
box-sizing: border-box;
border: 1px solid #c0c0c0;
border-bottom: 1px solid #bbb;
background: #f5f5f5;
display: flex;
flex-direction: column;
flex: none;
`;

const DocTabs = styled.div`
height: 23px;
display: flex;
align-items: flex-end;
padding-left: 23px;
border-bottom: 4px solid #bcbcbc;
box-sizing: content-box;
flex: none;
`;

const DocTab = styled.div`
width: 74px;
height: 19px;
background: #fff;
border: 1px solid #bbb;
border-bottom: none;
border-radius: 3px 3px 0 0;
display: flex;
align-items: center;
gap: 4px;
padding: 0 0 2px 6px;
box-sizing: border-box;
font-size: 11.700px;
`;

const Canvas = styled.div`
margin: 0 4px 0 5px;
height: 618px;
background: #000;
overflow: hidden;
flex: none;
`;

const LowerDocks = styled.div`
height: 145px;
margin-top: 5px;
display: flex;
gap: 5px;
flex: none;
`;

const SdlDock = styled.div`
width: 551px;
display: flex;
flex-direction: column;
flex: none;
`;

const SdlTools = styled.div`
height: 31px;
box-sizing: border-box;
display: flex;
align-items: center;
gap: 1.500px;
padding-bottom: 3px;
flex: none;
`;

const TreeBox = styled.div`
height: 71px;
box-sizing: border-box;
border: 1px solid #999;
border-bottom: none;
background: #fff;
display: flex;
justify-content: space-between;
overflow: hidden;
flex: none;
`;

const TreeList = styled.div`
padding: 0 0 0 6px;
margin-top: -1px;
`;

const TreeRow = styled.div`
height: 16px;
display: flex;
align-items: center;
font-size: 11.500px;
color: #222;
`;

const Expander = styled.div`
width: 9px;
height: 9px;
box-sizing: border-box;
border: 1px solid #999;
position: relative;
flex: none;
&::before { content: ''; position: absolute; left: 1px; right: 1px; top: 3px; height: 1px; background: #222; }
&::after { content: ''; position: absolute; top: 1px; bottom: 1px; left: 3px; width: 1px; background: #222; }
`;

const TreeCheck = styled.div`
width: 13px;
height: 13px;
box-sizing: border-box;
border: 2px solid #111;
margin-left: 6px;
flex: none;
`;

const TreeDots = styled.div`
width: 17px;
border-top: 1px dotted #888;
flex: none;
`;

const CommandDock = styled.div`
flex: 1;
min-width: 0;
display: flex;
flex-direction: column;
`;

const CommandBody = styled.div`
height: 122px;
margin-top: 2px;
box-sizing: border-box;
display: flex;
justify-content: space-between;
background: #fff;
border-left: 2px solid #888;
border-bottom: 1px solid #bbb;
padding-right: 2px;
flex: none;
`;

const CommandText = styled.pre`
margin: -1px 0 0;
font-family: "DejaVu Sans Mono", "Liberation Mono", monospace;
font-size: 11.650px;
line-height: 12px;
color: #222;
padding-left: 1px;
overflow: hidden;
`;

const StatusBar = styled.div`
height: 20px;
box-sizing: border-box;
border-bottom: 1px solid #666;
display: flex;
align-items: center;
justify-content: flex-end;
padding-right: 10px;
font-size: 11px;
color: #333;
flex: none;
`;

const StatusIcon = styled.div`
width: 20px;
height: 19px;
border: 1px solid #ccc;
border-radius: 2px;
background: #fff;
display: flex;
align-items: center;
justify-content: center;
box-sizing: border-box;
margin-right: 6px;
`;

const StatusText = styled.div`
border-left: 1px solid #ccc;
padding-left: 6px;
height: 100%;
display: flex;
align-items: center;
`;

/* ---------- taskbar ---------- */
const Taskbar = styled.div`
height: 36px;
box-sizing: border-box;
background: #f1f1f1;
display: flex;
align-items: center;
padding: 0 14px 1px 5px;
font-family: Lato, "Open Sans", sans-serif;
font-size: 13.800px;
flex: none;
`;

const ShowDesktop = styled.div`
width: 30px;
height: 27px;
box-sizing: border-box;
border: 1px solid #ccc;
border-radius: 3px;
background: #f0f0f0;
display: flex;
align-items: center;
justify-content: center;
margin-right: 6px;
flex: none;
`;

const TaskButton = styled.div`
width: 262px;
height: 29px;
box-sizing: border-box;
border: 1px solid ${(p) => (p.$active ? '#c2c2c2' : '#d2d2d2')};
border-radius: 3px;
background: ${(p) => (p.$active ? '#d4d4d4' : '#ececec')};
color: ${(p) => (p.$dim ? '#9a9a9a' : '#555')};
display: flex;
align-items: center;
gap: 7px;
padding-left: ${(p) => p.$pl || 9}px;
padding-bottom: 1px;
margin-right: ${(p) => p.$mr || 4}px;
white-space: pre;
overflow: hidden;
flex: none;
`;

const Pager = styled.div`
margin-left: auto;
display: flex;
gap: 4px;
`;

const PagerCell = styled.div`
width: 53px;
height: 28px;
box-sizing: border-box;
background: ${(p) => (p.$on ? '#f6f6f6' : '#e6e6e6')};
border: 1px solid #d8d8d8;
border-top: ${(p) => (p.$on ? '3px solid #c4c4c4' : '1px solid #d8d8d8')};
border-radius: 2px;
`;

const TaskIcon = styled.svg`
flex: none;
`;

const AppIcon = ({ bg, label, color, mid }) => (
    <TaskIcon width="22" height="26" viewBox="0 0 22 26">
        <rect x="0.500" y="0.500" width="21" height="25" fill={bg} stroke="#333" />
        <path d="M1 25Q8 14 21 15v10z" fill={mid} />
        <text x="11" y="12" textAnchor="middle" fontSize="9" fill={color} fontWeight="700" fontFamily="Liberation Sans">{label}</text>
    </TaskIcon>
);

const Cabinet = ({ dim }) => (
    <TaskIcon width="18" height="22" viewBox="0 0 18 22" opacity={dim ? 0.5 : 1}>
        <path d="M1 3q8-4 16 0v18H1z" fill="#5a8ccc" stroke="#34609c" />
        <path d="M3 6h12v6H3zM3 14h12v6H3z" fill="#a4c2e4" stroke="#34609c" />
        <path d="M7 9h4M7 17h4" stroke="#eee" />
    </TaskIcon>
);

/* ---------- the layout drawing ---------- */
const hatch = (id, color, n, w) => {
    const cells = [];
    for (let x = 0; x < n; x++) {
        for (let y = 0; y < n; y++) {
            if ((x + y) % n < w) cells.push(<rect key={`${x}-${y}`} x={x} y={y} width="1" height="1" fill={color} />);
        }
    }
    return <pattern key={id} id={id} width={n} height={n} patternUnits="userSpaceOnUse">{cells}</pattern>;
};

const dotsPattern = (id, color, n, pts) => (
    <pattern key={id} id={id} width={n} height={n} patternUnits="userSpaceOnUse">
        {pts.map(([x, y]) => <rect key={`${x}-${y}`} x={x} y={y} width="1" height="1" fill={color} />)}
    </pattern>
);

const patterns = [
    dotsPattern('nwell', '#0c8a72', 4, [[1, 1]]),
    dotsPattern('nimp', '#0bb868', 3, [[0, 0], [1, 0], [0, 1]]),
    dotsPattern('nimp2', '#0bb868', 3, [[2, 1], [1, 2], [2, 2]]),
    dotsPattern('pimp', '#c496c4', 3, [[0, 0], [1, 0], [0, 1]]),
    hatch('active', '#27a6bb', 2, 1),
    hatch('metal', '#1414f0', 3, 2),
    hatch('poly', '#ff1010', 3, 2),
    hatch('contact', '#ecdf98', 5, 2),
    dotsPattern('label', '#4a1a90', 4, [[1, 0], [1, 1], [1, 2]]),
];

// pattern, border colour, x1, y1, x2, y2
const wells = [
    ['nimp', '#0bc070', 894, 383, 973, 535],
    ['pimp', '#d8a8d8', 973, 383, 1206, 535],
    ['nimp', '#0bc070', 974, 677, 1204, 773],
    ['pimp', '#d8a8d8', 894, 677, 974, 773],
    ['pimp', '#d8a8d8', 1204, 678, 1285, 773],
];

const actives = [
    [914, 403, 955, 515], [990, 403, 1187, 515],
    [914, 697, 955, 753], [993, 698, 1185, 753], [1223, 698, 1264, 753],
];

const polys = [
    [1042, 379, 1062, 537], [1042, 537, 1062, 777],
    [1118, 379, 1137, 537], [1117, 537, 1137, 777],
];

const metals = [
    [917, 406, 952, 514], [993, 326, 1031, 514], [1072, 406, 1108, 514], [1148, 406, 1183, 643],
    [1072, 611, 1243, 643], [1072, 611, 1107, 752],
    [917, 701, 952, 750], [996, 700, 1031, 829], [1148, 700, 1183, 829], [1227, 701, 1262, 750],
];

const contacts = [
    [924, 413, 944, 433], [924, 485, 944, 505], [1000, 413, 1025, 433], [1000, 485, 1025, 505],
    [1080, 413, 1100, 433], [1080, 485, 1100, 505], [1156, 413, 1176, 433], [1156, 485, 1176, 505],
    [924, 715, 944, 735], [1004, 715, 1024, 735], [1080, 715, 1100, 735], [1156, 715, 1176, 735], [1235, 715, 1255, 735],
];

const ports = [[1080, 334, 1099, 353], [1213, 618, 1233, 638], [1080, 802, 1100, 822]];
const polyPorts = [[1042, 622, 1062, 640], [1118, 620, 1137, 640]];

const pinLabels = [
    ['Vdd', 1081, 352, 1081, 366], ['A', 1042, 640, 1043, 654], ['B', 1118, 639, 1118, 652],
    ['Out', 1213, 637, 1213, 650], ['Gnd', 1080, 821, 1080, 835],
];

const devLabels = [
    ['B', 934, 463], ['B', 1010, 463], ['S', 1012, 463], ['G', 1051, 463], ['S', 1088, 463], ['D', 1089, 463], ['G', 1127, 463], ['D', 1165, 463],
    ['B', 934, 729], ['S', 1013, 729], ['G', 1051, 729], ['D', 1089, 729], ['G', 1127, 729], ['S', 1165, 729], ['B', 1244, 729],
];

const box = (x1, y1, x2, y2, fill, stroke, key) => (
    <rect key={key} x={x1 + 0.5} y={y1 + 0.5} width={x2 - x1} height={y2 - y1} fill={fill} stroke={stroke} />
);

const Cross = ({ x, y, r = 5, c = '#ffc4c4' }) => <path d={`M${x - r} ${y + 0.5}h${r * 2}M${x + 0.5} ${y - r}v${r * 2}`} stroke={c} />;

const LayoutDrawing = () => (
    <svg width="1651" height="618" viewBox="264 250 1651 618" shapeRendering="crispEdges">
        <defs>{patterns}</defs>
        {box(856, 345, 1244, 573, 'url(#nwell)', '#0b7a66', 'nw')}
        <path d="M932.500 345v228M1167.500 345v228" stroke="#0b7a66" />
        {wells.map((r, i) => <g key={i}>{box(r[2], r[3], r[4], r[5], '#000', 'none')}{box(r[2], r[3], r[4], r[5], `url(#${r[0]})`, r[1])}</g>)}
        {box(974, 384, 1042, 534, 'url(#nimp2)', 'none', 'mix')}
        {actives.map((r, i) => box(r[0], r[1], r[2], r[3], 'url(#active)', '#27a6bb', `a${i}`))}
        {polys.map((r, i) => box(r[0], r[1], r[2], r[3], 'url(#poly)', '#ff1010', `p${i}`))}
        {metals.map((r, i) => box(r[0], r[1], r[2], r[3], 'url(#metal)', '#1010ff', `m${i}`))}
        {contacts.map((r, i) => box(r[0], r[1], r[2], r[3], 'url(#contact)', 'none', `c${i}`))}
        {box(914, 402, 1187, 516, 'none', '#4a1a90', 'o1')}
        {box(914, 696, 1264, 754, 'none', '#4a1a90', 'o2')}
        {polyPorts.map((r, i) => box(r[0], r[1], r[2], r[3], '#2a0e4e', '#3a1a70', `pp${i}`))}
        {ports.map((r, i) => box(r[0], r[1], r[2], r[3], 'url(#label)', '#4a1a90', `pt${i}`))}
        <g shapeRendering="auto">
            {pinLabels.map(([t, cx, cy, x, y]) => (
                <g key={t}>
                    <Cross x={cx} y={cy} />
                    <text x={x} y={y} fontSize="17" fill="#ffff20" fontFamily="Liberation Mono, monospace" textLength={t.length * 7.7} lengthAdjust="spacingAndGlyphs">{t}</text>
                </g>
            ))}
            {devLabels.map(([t, x, y], i) => (
                <text key={i} x={x} y={y} textAnchor="middle" fontSize="17" fill="#ffff20" fontFamily="Liberation Mono, monospace">{t}</text>
            ))}
        </g>
        <Cross x={700} y={815} r={9} c="#fff" />
        <path d="M1662 450v16l3.500-3.500 2.500 6 2.200-1-2.500-5.500h5z" fill="#fff" stroke="#222" shapeRendering="auto" />
        <rect x="1638.500" y="471.500" width="12" height="12" fill="none" stroke="#fff" strokeDasharray="2 2" />
        <rect x="1678.500" y="471.500" width="12" height="12" fill="none" stroke="#fff" strokeDasharray="2 2" />
    </svg>
);

/* ---------- data ---------- */
const layers = [
    ['Deep_N_Well', '#6a3a9c', 'dots', 'drawing'], ['P_Well', '#f8e4c0', 'dots', 'drawing'], ['N_Well', '#0b6e5e', 'dots', 'drawing'],
    ['Active', '#2ba4dc', 'check', 'drawing'], ['ThickActive', '#c88040', 'dots', 'drawing'], ['N_Implant', '#00d060', 'fine', 'drawing'],
    ['P_Implant', '#d8a0d8', 'fine', 'drawing'], ['Poly', '#f00000', 'diag', 'drawing'], ['SilicideBlock', '#fff8c0', 'dots', 'drawing'],
    ['ResistorImplant', '#0a4a7c', 'fine', 'drawing'], ['Poly2', '#3c0a7c', 'diag', 'drawing'], ['Contact', '#f4e490', 'check', 'drawing'],
    ['Metal1', '#0000ff', 'diag', 'drawing'], ['Via1', '#d0a0d0', 'check', 'drawing'], ['Metal2', '#00e800', 'dots', 'drawing'],
    ['Via2', '#20d8c0', 'grid', 'drawing'], ['Metal3', '#f4b400', 'fine', 'drawing'], ['Via3', '#ff7060', 'grid', 'drawing'],
    ['Top_Capacitor_', '#2c1060', 'dots', 'drawing'], ['Metal4', '#f000f0', 'fine', 'drawing'], ['Passivation', '#40107c', 'check', 'drawing'],
    ['Resistor_ID', '#301060', 'dots', 'drawing'], ['Diode_ID', '#301060', 'dots', 'drawing'], ['LPNP_ID', '#10a4e4', 'dots', 'drawing'],
    ['PNP_Emitter_ID', '#1c0c40', 'dots', 'drawing'], ['Poly', '#3c0a7c', 'diag', 'label'], ['Poly2', '#3c0a7c', 'diag', 'label'],
    ['Metal1', '#2c1070', 'dots', 'label'], ['Metal2', '#2c1070', 'dots', 'label'], ['Metal3', '#1c0c50', 'dots', 'label'], ['Metal4', '#40107c', 'fine', 'label'],
];

const commandLog = `Processing netlist...
Found instance: XMn1 of TCell Generic_250nm_Devices_nmos25x (bottomTap = 0) (topTap = 0) (rightTap = 0) (leftTap = 1)
Found instance: XMn2 of TCell Generic_250nm_Devices_nmos25x (bottomTap = 0) (topTap = 0) (rightTap = 0) (leftTap = 1)
Found instance: XMp1 of TCell Generic_250nm_Devices_pmos25x (bottomTap = 0) (topTap = 0) (rightTap = 0) (leftTap = 1)
Found instance: XMp2 of TCell Generic_250nm_Devices_pmos25x (bottomTap = 0) (topTap = 0) (rightTap = 0) (leftTap = 1)

0 instances added (and 4 found)
0 ports added (and 5 found)
SDL profile: 0.09 total (0.00 parse + 0.00 T-Cell + 0.00 GUI)`;

const menus = [['F', 'ile', 11], ['E', 'dit', 20], ['V', 'iew', 17.5], ['D', 'raw', 17.5], ['C', 'ell', 18], ['S', 'etup', 17.5], ['T', 'ools', 19], ['W', 'indow', 17.3], ['H', 'elp', 17.7]];
const ports2 = ['A (input)', 'B (input)', 'Gnd (inout)', 'N_1', 'Out (output)'];

const App = () => (
    <Page>
        <GlobalStyle />
        <TopBar>
            <svg width="16" height="16" viewBox="0 0 16 16">
                <circle cx="5" cy="5" r="2.500" fill="#c04090" /><circle cx="11" cy="4" r="2.500" fill="#e8a020" />
                <circle cx="4" cy="11" r="2.500" fill="#3c80c8" /><circle cx="11" cy="11" r="2.500" fill="#58a838" /><circle cx="8" cy="8" r="2" fill="#ddd" />
            </svg>
            <TopMenu $ml={7}>Applications</TopMenu>
            <TopMenu $ml={21}>Places</TopMenu>
            <TopMenu $ml={25}>S-Edit 2023.2 - [NOR_4bit FinalProkect:schematic MicroProcessor/ALU_1/NOR_4bit_1]</TopMenu>
            <TrayIcon $ml={911} width="16" height="20" viewBox="0 0 16 20">
                <rect x="0.500" y="0.500" width="15" height="19" fill="#e8f0fa" stroke="#5a9ae0" />
                <path d="M4 4h5q3 2 0 5v2" fill="none" stroke="#2a6ac0" strokeWidth="2" />
                <circle cx="4" cy="14" r="4" fill="#d82020" /><path d="M2.500 12.500l3 3m0-3l-3 3" stroke="#fff" />
            </TrayIcon>
            <TopMenu $ml={32}>Sun</TopMenu>
            <TopMenu $ml={9} $tight={-0.6}>2:04 PM</TopMenu>
            <TrayIcon $ml={5} width="8" height="8" viewBox="0 0 8 8"><circle cx="4" cy="4" r="4" fill="#333" /></TrayIcon>
            <TrayIcon $ml={25} width="16" height="16" viewBox="0 0 16 16">
                <path d="M1 6q7-6 14 0M3.500 9q4.500-4 9 0M6 12q2-2 4 0" fill="none" stroke="#333" strokeWidth="1.800" /><circle cx="8" cy="14" r="1.500" fill="#333" />
            </TrayIcon>
            <TrayIcon $ml={11} width="16" height="16" viewBox="0 0 16 16">
                <path d="M1 5h3l4-4v14l-4-4H1z" fill="#333" /><path d="M10 4q2 4 0 8M12 2q4 6 0 12" fill="none" stroke="#555" strokeWidth="1.500" />
            </TrayIcon>
            <TrayIcon $ml={15} width="12" height="20" viewBox="0 0 12 20">
                <path d="M4 1h4v2h3v16H1V3h3z" fill="#ddd" stroke="#555" /><path d="M7 6l-3 6h2l-1 5 3-7H6z" fill="#222" />
            </TrayIcon>
        </TopBar>
        <TitleBar>
            L-Edit 2023.2 - [nor_2*     CND_Advanced_Full_Custom*]
            <WinButtons>
                <svg width="14" height="14" viewBox="0 0 14 14"><path d="M2 11h9" stroke="#888" strokeWidth="2" /></svg>
                <svg width="14" height="14" viewBox="0 0 14 14"><rect x="4" y="4" width="5" height="5" fill="none" stroke="#888" strokeWidth="2" /></svg>
                <svg width="14" height="14" viewBox="0 0 14 14"><path d="M3 3l8 8M11 3l-8 8" stroke="#888" strokeWidth="2" /></svg>
            </WinButtons>
        </TitleBar>
        <MenuBar>
            {menus.map(([k, rest, ml]) => <MenuItem key={k} $ml={ml}><u>{k}</u>{rest}</MenuItem>)}
            <MdiButtons>
                <svg width="13" height="13" viewBox="0 0 13 13"><path d="M2 10h6" stroke="#222" /></svg>
                <svg width="13" height="13" viewBox="0 0 13 13"><path d="M2 5h6v6H2zM5 5V2h6v6H8" fill="none" stroke="#333" /></svg>
                <svg width="13" height="13" viewBox="0 0 13 13"><path d="M2 2l8 8M10 2l-8 8" stroke="#222" /></svg>
            </MdiButtons>
        </MenuBar>

        <ToolArea>
            <ToolRow $h={26}>
                <Toolbar>
                    <Grip />
                    <Tools items="new open saves stack | cut copy paste | undo redo | zin zout binoc binoU binoD hand | tree lens layerY" />
                    <Combo $w={90}>All Levels</Combo>
                    <Tools items="!layerSel | arrL ~ddk arrRg ~ddg | open copyY swap | wireB book" />
                    <Handle />
                </Toolbar>
                <Toolbar $w={229}>
                    <Grip />
                    <Field $w={144} $ml={3}>12.690 : 4.845</Field>
                    <Combo $w={67}>Microns</Combo>
                </Toolbar>
                <Toolbar>
                    <Grip />
                    <Tools items="!pencil save saves nav1 nav2" />
                    <Handle />
                </Toolbar>
            </ToolRow>
            <ToolRow $h={27}>
                <Toolbar>
                    <Grip />
                    <Tools items="!pointer | rect | polyL polyP tri | w1 w2 w3 |" />
                    <Combo $w={90} $ml={4} $mr={2}>Default</Combo>
                    <Tools items="| pR pL pP pT bigT | rule1 rule2 rule3 | layer2 blueSq" />
                    <Handle />
                </Toolbar>
                <Toolbar $ml={1}>
                    <Grip />
                    <Tools items="target targetY" />
                    <Field $w={79} $h={19} $ml={3} $left $bg="#fff">0.000 0.000</Field>
                    <Handle />
                </Toolbar>
                <Toolbar $w={239} $ml={1}>
                    <Grip />
                    <Field $w={71} $h={19}>SELECT</Field>
                    <Field $w={71} $h={19} $ml={6}></Field>
                    <Field $w={71} $h={19} $ml={6}>SELECT</Field>
                </Toolbar>
            </ToolRow>
            <ToolRow $h={27}>
                <Toolbar>
                    <Grip />
                    <Tools items="g1 g2 g3 g4 g5 g6 g7 g8 g9 g10 dl g11 g12 | n1 n2 n3 n4 n5" />
                    <Handle />
                </Toolbar>
                <Toolbar $ml={1}>
                    <Grip />
                    <Tools items="!e1 e2 e3 e4 e5 e6 !text e7 | mbb magnet wrench | !meter meterW" />
                    <Handle />
                </Toolbar>
            </ToolRow>
            <ToolRow $h={26}>
                <Toolbar>
                    <Grip />
                    <Tools items="y1 y2 y3 y4 bulb brush y5 y6" />
                    <Handle />
                </Toolbar>
                <Toolbar $ml={1}>
                    <Grip />
                    <Tools items="probe brk" />
                    <Handle />
                </Toolbar>
            </ToolRow>
            <ToolRow $h={26}>
                <Toolbar>
                    <Grip />
                    <Tools items="h1 h2 h3 | gear | h4 h5 h6 | h7 h8 | h9 h10 h11 h12" />
                    <Handle />
                </Toolbar>
                <Toolbar $ml={1}>
                    <Grip />
                    <Tools items="drc lvs pex rve wrGreen termG" />
                    <Handle />
                </Toolbar>
                <Toolbar $ml={1}>
                    <Grip />
                    <Tools items="check lensG | sunB brushO arrLB sun arrRB" />
                    <Field $w={85} $ml={3}></Field>
                    <Combo $w={114} $ml={7} $mr={4}> </Combo>
                    <Tools items="chkSun chkRed | panel gearB hammers" />
                    <Combo $w={231}> </Combo>
                    <Handle />
                </Toolbar>
                <Toolbar $ml={1}>
                    <Grip />
                    <Tools items="n1b n2b n3b no mfg | gearT upT" />
                    <Field $w={50} $bg="#fff" />
                    <Tools items="dnT moveT gridT pin" />
                    <Handle />
                </Toolbar>
                <Toolbar $ml={2}>
                    <Grip />
                    <Tools items="gearK bars | wrRed termR" />
                    <Handle />
                </Toolbar>
            </ToolRow>
        </ToolArea>

        <Workspace>
            <LeftDock>
                <DockTitle $mr={5}>Layer Palette<Marks /></DockTitle>
                <LayerPanel>
                    <CurrentLayer><Swatch $c="#6a3a9c" $p="dots" />Deep_N_Well:drawing</CurrentLayer>
                    <Combo $w={225} $h={19} $ml={0} $mr={0}>All</Combo>
                    <Spacer $h={3} />
                    <Field $w={225} $h={18} $bg="#fff" />
                    <Spacer $h={7} />
                    <TableBox>
                        <TableMain>
                            <TableRow $head>
                                <HeadCell>Layer</HeadCell>
                                <HeadCell>Purpose</HeadCell>
                                <HeadCell $last />
                            </TableRow>
                            {layers.map(([name, c, p, purpose], i) => (
                                <TableRow key={i} $focus={i === 0}>
                                    <LayerCell><Swatch $c={c} $p={p} />{name}</LayerCell>
                                    <PurposeCell>{purpose}</PurposeCell>
                                    <ColMark />
                                </TableRow>
                            ))}
                        </TableMain>
                        <VBar>
                            <ScrollBtn $dir="up" />
                            <ScrollThumb $len={232} />
                            <ScrollGap />
                            <ScrollBtn $dir="down" />
                        </VBar>
                        <HBar>
                            <ScrollBtn $dir="left" />
                            <ScrollThumb $wide={109} />
                            <ScrollGap />
                            <ScrollBtn $dir="right" />
                        </HBar>
                    </TableBox>
                    <SelectRow>
                        Select:
                        <SelectIcons><Tools items="sel1 selP blueSq selT selB" /></SelectIcons>
                    </SelectRow>
                    <Combo $w={225} $h={19} $ml={0} $mr={0}> </Combo>
                </LayerPanel>
                <TabStrip $pl={2}>
                    <DockTab $w={57}>Libraries</DockTab>
                    <DockTab $w={63} $on>Layer P...</DockTab>
                    <DockTab $w={65} $div>Find in ...</DockTab>
                    <DockTab $w={68}>Selectio...</DockTab>
                </TabStrip>
            </LeftDock>

            <RightSide>
                <DocFrame>
                    <DocTabs>
                        <DocTab>
                            <svg width="13" height="17" viewBox="0 0 13 17">
                                <path d="M1 0h8l3 3v14H1z" fill="#c83030" />
                                <text x="3" y="14" fontSize="9" fill="#fff" fontFamily="Liberation Sans" fontWeight="700">L</text>
                            </svg>
                            nor_2*
                            <svg width="16" height="10" viewBox="0 0 16 10"><path d="M5 1l8 8M13 1l-8 8" stroke="#111" strokeWidth="1.500" /></svg>
                        </DocTab>
                    </DocTabs>
                    <Canvas><LayoutDrawing /></Canvas>
                </DocFrame>
                <LowerDocks>
                    <SdlDock>
                        <DockTitle $h={18}>SDL Navigator<Marks /></DockTitle>
                        <SdlTools>
                            <Tools items="sTree open | sTarget sRoute sNet sChk sLens" />
                            <Sep $blank />
                            <Tools items="sCirc sDrop bulb brush !sHand" />
                            <Field $w={72} $h={19} $ml={6} $bg="#fff" />
                        </SdlTools>
                        <TreeBox>
                            <TreeList>
                                {ports2.map((t) => (
                                    <TreeRow key={t}><Expander /><TreeCheck /><TreeDots />{t}</TreeRow>
                                ))}
                            </TreeList>
                            <VBar>
                                <ScrollBtn $dir="up" />
                                <ScrollThumb $len={24} />
                                <ScrollGap />
                                <ScrollBtn $dir="down" />
                            </VBar>
                        </TreeBox>
                        <TabStrip $pl={4} $line>
                            <DockTab $w={125}>Verification Navigator</DockTab>
                            <DockTab $w={85} $on>SDL Navigator</DockTab>
                        </TabStrip>
                    </SdlDock>
                    <CommandDock>
                        <DockTitle $h={18} $fs={10.5}>Command<Marks /></DockTitle>
                        <CommandBody>
                            <CommandText>{commandLog}</CommandText>
                            <VBar>
                                <ScrollBtn $dir="up" />
                                <ScrollGap />
                                <ScrollThumb $len={6} />
                                <ScrollBtn $dir="down" />
                            </VBar>
                        </CommandBody>
                    </CommandDock>
                </LowerDocks>
            </RightSide>
        </Workspace>

        <StatusBar>
            <StatusIcon><Icon name="sChk" size={14} /></StatusIcon>
            <StatusText>Mode: Drawing</StatusText>
        </StatusBar>

        <Taskbar>
            <ShowDesktop>
                <svg width="15" height="15" viewBox="0 0 15 15"><path d="M1 7h6v6H1z" fill="#333" /><path d="M8 2h6v6H8z" fill="#333" /><path d="M7 9h2" stroke="#333" /></svg>
            </ShowDesktop>
            <TaskButton $dim><Cabinet dim />[Home]</TaskButton>
            <TaskButton><Cabinet />Pictures</TaskButton>
            <TaskButton $mr={5}><TaskIcon width="20" height="20" viewBox="0 0 20 20"><rect x="1" y="1" width="18" height="18" fill="#2e3436" stroke="#777" /><path d="M4 6l3 2-3 2M8 12h4" fill="none" stroke="#ddd" /></TaskIcon>Terminal</TaskButton>
            <TaskButton $active $pl={6} $mr={6}><AppIcon bg="#6a9a20" mid="#b4c838" label="SED" color="#111" />S-Edit 2023.2 - [nor_2 CND_Advan...</TaskButton>
            <TaskButton $pl={6}><AppIcon bg="#e8481c" mid="#f08030" label="LED" color="#111" />L-Edit 2023.2 - [nor_2*     CND_A...</TaskButton>
            <Pager>
                <PagerCell $on /><PagerCell /><PagerCell /><PagerCell />
            </Pager>
        </Taskbar>
    </Page>
);

export default App;
